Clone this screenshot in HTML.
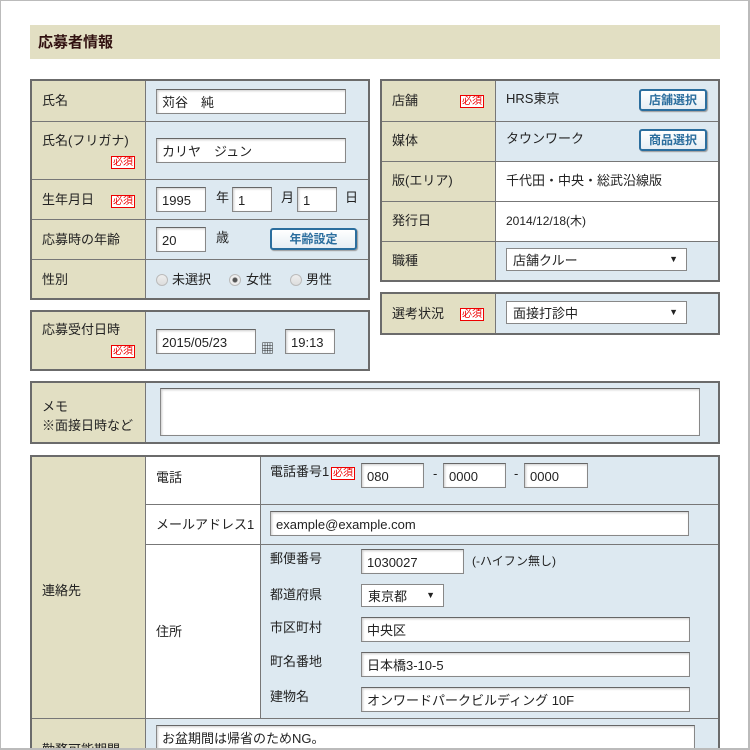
<!DOCTYPE html>
<html><head><meta charset="utf-8"><style>
*{box-sizing:border-box;margin:0;padding:0}
html,body{width:750px;height:750px;overflow:hidden}
body{background:#fff;font-family:"Liberation Sans","Noto Sans CJK JP",sans-serif;font-size:13px;line-height:1;color:#222;position:relative}
.frame{position:absolute;left:0;top:0;width:750px;height:750px;border:1px solid #bbb;border-right:2px solid #bbb;border-bottom:2px solid #bbb;z-index:50;pointer-events:none}
.a{position:absolute}
.hdr{left:30px;top:25px;width:690px;height:34px;background:#e2dfc3;font-weight:bold;font-size:15px;color:#301010;padding:10px 0 0 8px}
.tb{position:absolute;border:2px solid #6b6b6b;background:#dde9f1}
.lab{position:absolute;background:#e2dfc3;border-right:1px solid #777}
.hl{position:absolute;left:0;right:0;height:1px;background:#777}
.t{position:absolute;white-space:nowrap;line-height:1}
.inp{position:absolute;background:#fff;border:1px solid #888;border-top-color:#666;box-shadow:inset 1px 1px 2px #ccc;height:25px;padding:6px 5px 0;line-height:1;font-size:13px;white-space:nowrap}
.req{position:absolute;border:1px solid #e00;color:#e00;font-size:10px;line-height:11px;padding:0 1px;background:#fff}
.btn{position:absolute;border:2px solid #2b6e9e;border-radius:3px;background:linear-gradient(#fff,#e6eef4);color:#2b6e9e;font-weight:bold;font-size:12px;text-align:center;height:22px;line-height:18px;box-shadow:1px 1px 1px #999}
.sel{position:absolute;background:#fff;border:1px solid #888;height:23px;padding:5px 6px 0;line-height:1;font-size:13px}
.sel:after{content:"▼";position:absolute;right:8px;top:6px;font-size:9px}
.rad{position:absolute;width:12px;height:12px;border-radius:50%;border:1px solid #bbb;background:linear-gradient(#eee,#ddd)}
.white{position:absolute;background:#fff}
</style></head><body>
<div class="frame"></div>
<div class="a hdr">応募者情報</div>

<div class="tb" style="left:30px;top:79px;width:340px;height:221px">
 <div class="lab" style="left:0;top:0;width:114px;height:217px"></div>
 <div class="hl" style="top:40px"></div><div class="hl" style="top:98px"></div><div class="hl" style="top:138px"></div><div class="hl" style="top:178px"></div>
 <div class="t" style="left:10px;top:13px">氏名</div>
 <div class="t" style="left:10px;top:53px">氏名(フリガナ)</div>
 <div class="req" style="left:79px;top:75px">必須</div>
 <div class="t" style="left:10px;top:112px">生年月日</div>
 <div class="req" style="left:79px;top:114px">必須</div>
 <div class="t" style="left:10px;top:152px">応募時の年齢</div>
 <div class="t" style="left:10px;top:192px">性別</div>
 <div class="inp" style="left:124px;top:8px;width:190px">苅谷　純</div>
 <div class="inp" style="left:124px;top:57px;width:190px">カリヤ　ジュン</div>
 <div class="inp" style="left:124px;top:106px;width:50px">1995</div>
 <div class="t" style="left:184px;top:110px">年</div>
 <div class="inp" style="left:200px;top:106px;width:40px">1</div>
 <div class="t" style="left:249px;top:110px">月</div>
 <div class="inp" style="left:265px;top:106px;width:40px">1</div>
 <div class="t" style="left:313px;top:110px">日</div>
 <div class="inp" style="left:124px;top:146px;width:50px">20</div>
 <div class="t" style="left:184px;top:150px">歳</div>
 <div class="btn" style="left:238px;top:147px;width:87px">年齢設定</div>
 <div class="rad" style="left:124px;top:193px"></div><div class="t" style="left:140px;top:192px">未選択</div>
 <div class="rad" style="left:197px;top:193px;background:radial-gradient(#555 2px,#eee 3px)"></div><div class="t" style="left:214px;top:192px">女性</div>
 <div class="rad" style="left:258px;top:193px"></div><div class="t" style="left:274px;top:192px">男性</div>
</div>

<div class="tb" style="left:30px;top:310px;width:340px;height:61px">
 <div class="lab" style="left:0;top:0;width:114px;height:57px"></div>
 <div class="t" style="left:10px;top:11px">応募受付日時</div>
 <div class="req" style="left:79px;top:33px">必須</div>
 <div class="inp" style="left:124px;top:17px;width:100px">2015/05/23</div>
 <div class="t" style="left:229px;top:30px;font-size:13px">▦</div>
 <div class="inp" style="left:253px;top:17px;width:50px">19:13</div>
</div>

<div class="tb" style="left:380px;top:79px;width:340px;height:203px">
 <div class="white" style="left:114px;top:80px;width:222px;height:80px"></div>
 <div class="lab" style="left:0;top:0;width:114px;height:199px"></div>
 <div class="hl" style="top:40px"></div><div class="hl" style="top:80px"></div><div class="hl" style="top:120px"></div><div class="hl" style="top:160px"></div>
 <div class="t" style="left:10px;top:13px">店舗</div><div class="req" style="left:78px;top:14px">必須</div>
 <div class="t" style="left:10px;top:53px">媒体</div>
 <div class="t" style="left:10px;top:93px">版(エリア)</div>
 <div class="t" style="left:10px;top:133px">発行日</div>
 <div class="t" style="left:10px;top:173px">職種</div>
 <div class="t" style="left:124px;top:11px">HRS東京</div>
 <div class="btn" style="left:257px;top:8px;width:68px">店舗選択</div>
 <div class="t" style="left:124px;top:51px">タウンワーク</div>
 <div class="btn" style="left:257px;top:48px;width:68px">商品選択</div>
 <div class="t" style="left:124px;top:93px">千代田・中央・総武沿線版</div>
 <div class="t" style="left:124px;top:134px;font-size:12px">2014/12/18(木)</div>
 <div class="sel" style="left:124px;top:167px;width:181px">店舗クルー</div>
</div>

<div class="tb" style="left:380px;top:292px;width:340px;height:43px">
 <div class="lab" style="left:0;top:0;width:114px;height:39px"></div>
 <div class="t" style="left:10px;top:13px">選考状況</div><div class="req" style="left:78px;top:14px">必須</div>
 <div class="sel" style="left:124px;top:7px;width:181px">面接打診中</div>
</div>

<div class="tb" style="left:30px;top:381px;width:690px;height:63px">
 <div class="lab" style="left:0;top:0;width:114px;height:59px"></div>
 <div class="t" style="left:10px;top:14px;line-height:19px">メモ<br>※面接日時など</div>
 <div class="inp" style="left:128px;top:5px;width:540px;height:48px"></div>
</div>

<div class="tb" style="left:30px;top:455px;width:690px;height:310px">
 <div class="white" style="left:114px;top:0;width:115px;height:261px;border-right:1px solid #777"></div>
 <div class="lab" style="left:0;top:0;width:114px;height:300px"></div>
 <div class="hl" style="top:47px;left:114px"></div><div class="hl" style="top:87px;left:114px"></div><div class="hl" style="top:261px"></div>
 <div class="t" style="left:10px;top:127px">連絡先</div>
 <div class="t" style="left:124px;top:14px">電話</div>
 <div class="t" style="left:124px;top:61px">メールアドレス1</div>
 <div class="t" style="left:124px;top:168px">住所</div>
 <div class="t" style="left:238px;top:8px">電話番号1</div><div class="req" style="left:299px;top:10px">必須</div>
 <div class="inp" style="left:329px;top:6px;width:63px">080</div>
 <div class="t" style="left:401px;top:10px">-</div>
 <div class="inp" style="left:411px;top:6px;width:63px">0000</div>
 <div class="t" style="left:482px;top:10px">-</div>
 <div class="inp" style="left:492px;top:6px;width:64px">0000</div>
 <div class="inp" style="left:238px;top:54px;width:419px">example@example.com</div>
 <div class="t" style="left:238px;top:95px">郵便番号</div>
 <div class="inp" style="left:329px;top:92px;width:103px">1030027</div>
 <div class="t" style="left:440px;top:98px;font-size:12px">(-ハイフン無し)</div>
 <div class="t" style="left:238px;top:131px">都道府県</div>
 <div class="sel" style="left:329px;top:127px;width:83px">東京都</div>
 <div class="t" style="left:238px;top:164px">市区町村</div>
 <div class="inp" style="left:329px;top:160px;width:329px">中央区</div>
 <div class="t" style="left:238px;top:198px">町名番地</div>
 <div class="inp" style="left:329px;top:195px;width:329px">日本橋3-10-5</div>
 <div class="t" style="left:238px;top:233px">建物名</div>
 <div class="inp" style="left:329px;top:230px;width:329px">オンワードパークビルディング 10F</div>
 <div class="t" style="left:10px;top:286px">勤務可能期間</div>
 <div class="inp" style="left:124px;top:268px;width:539px;height:40px">お盆期間は帰省のためNG。</div>
</div>
</body></html>
